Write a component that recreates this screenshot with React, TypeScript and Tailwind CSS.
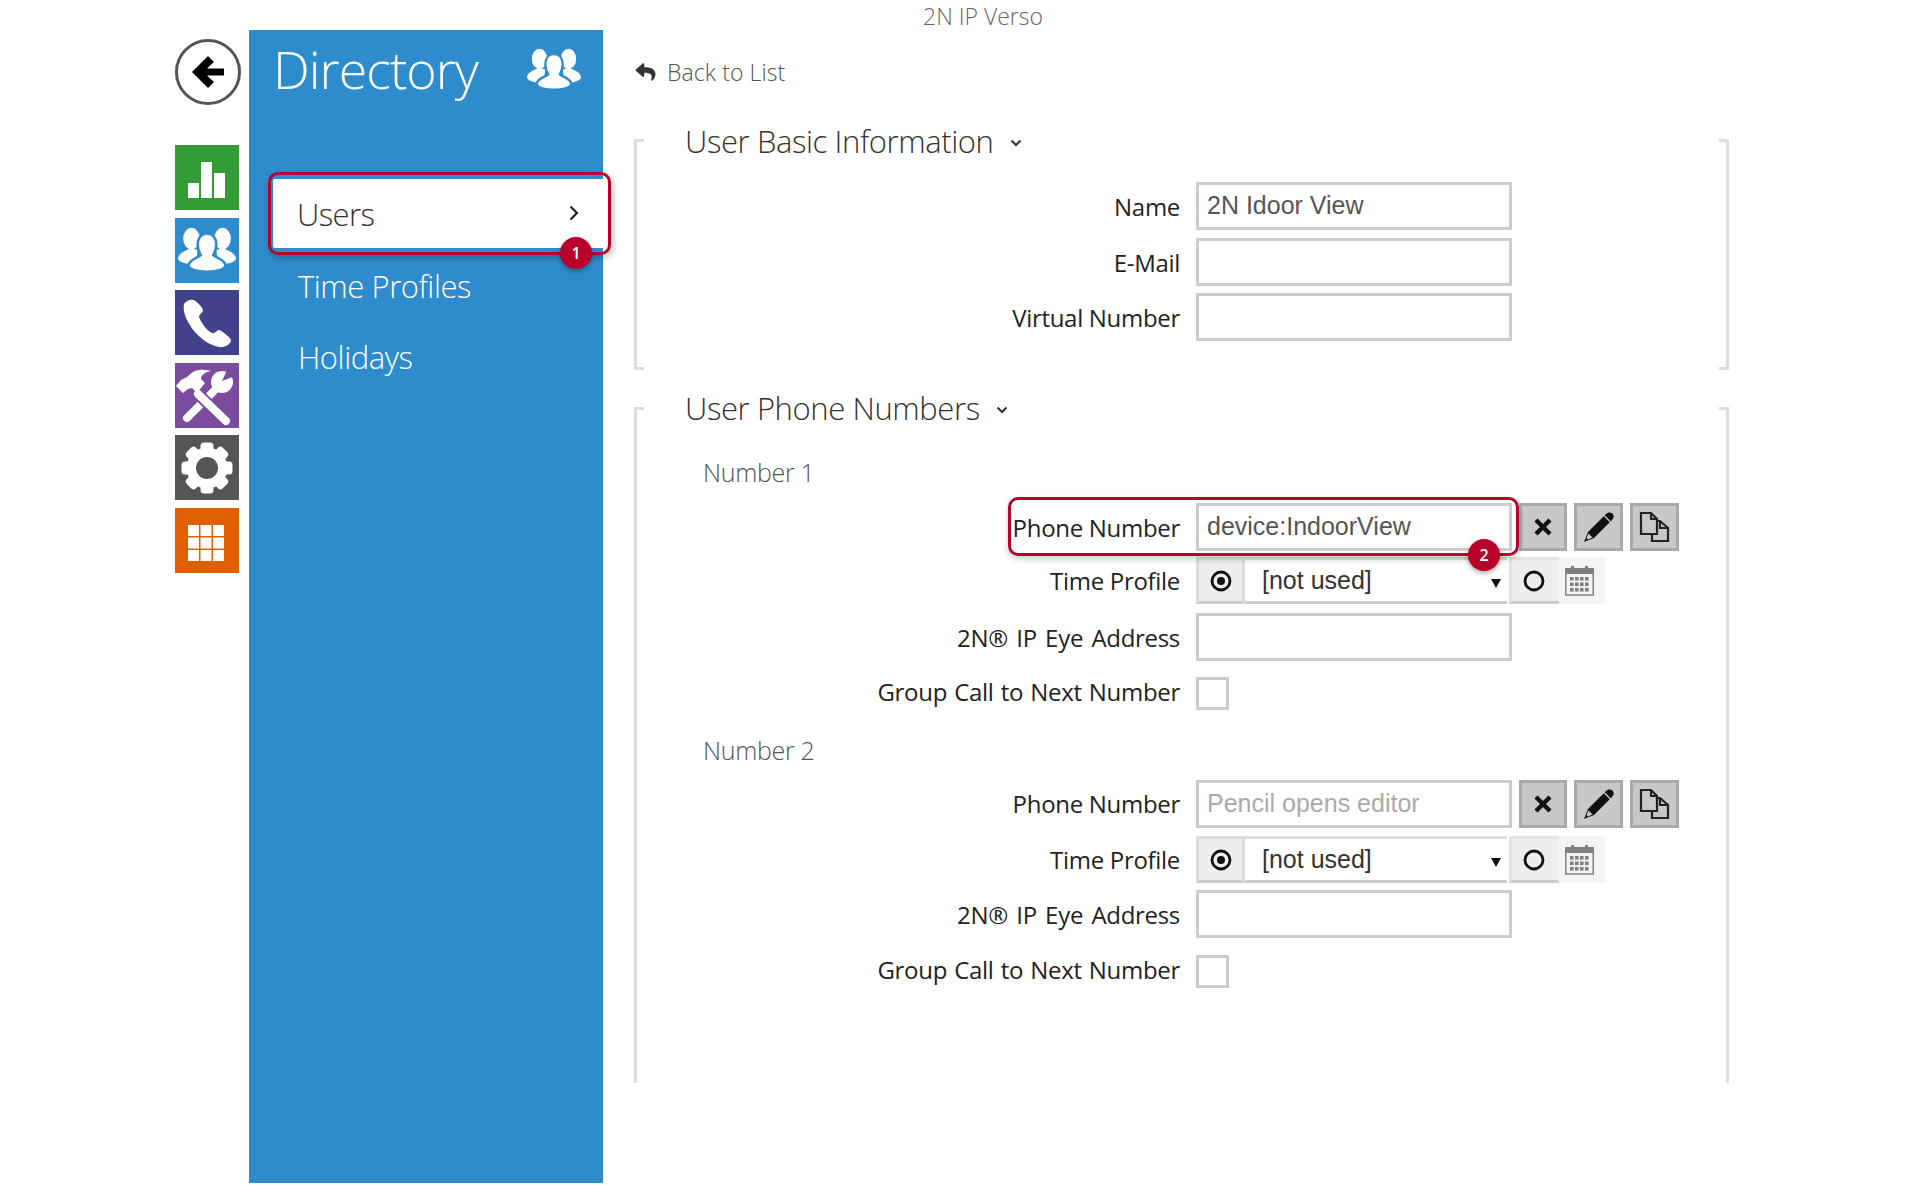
import { FunctionComponent, ReactNode } from "react";
import { FaReply } from "react-icons/fa";

const UsersIcon: FunctionComponent<{ cut: string; className: string }> = ({ cut, className }) => (
  <svg viewBox="0 0 58 44" className={className} fill="#fff">
    <ellipse cx="14" cy="11" rx="8" ry="10.5" />
    <path d="M1 30C2 24 9 23 13 20L20 22L18 36C10 36 1 34 1 30Z" />
    <ellipse cx="44" cy="11" rx="8" ry="10.5" />
    <path d="M57 30C56 24 49 23 45 20L38 22L40 36C48 36 57 34 57 30Z" />
    <path
      d="M29 6C35 6 38 11 38 17C38 22 36 25 35 27C38 30 46 31 47 37C46 41 38 43 29 43C20 43 12 41 11 37C12 31 20 30 23 27C22 25 20 22 20 17C20 11 23 6 29 6Z"
      stroke={cut}
      strokeWidth="2.5"
    />
  </svg>
);

const Tile: FunctionComponent<{ color: string; children: ReactNode }> = ({ color, children }) => (
  <div className={`w-[64px] h-[65px] flex items-center justify-center ${color}`}>{children}</div>
);

const TEETH = [0, 45, 90, 135, 180, 225, 270, 315];

const SideNav: FunctionComponent = () => (
  <div className="w-[249px] shrink-0 pl-[175px] flex flex-col">
    <div className="mt-[39px] w-[66px] h-[66px] rounded-full border-[3px] border-[#555] flex items-center justify-center">
      <svg viewBox="0 0 32 32" className="w-[32px] h-[32px]" fill="#000">
        <polygon points="0,16 16,0 22,6 15,12.5 32,12.5 32,19.5 15,19.5 22,26 16,32" />
      </svg>
    </div>
    <div className="mt-[40px] flex flex-col gap-[7.6px]">
      <Tile color="bg-[#339c36]">
        <svg viewBox="0 0 64 64" className="w-[64px] h-[64px]" fill="#fff">
          <rect x="13" y="37" width="11" height="15" />
          <rect x="26" y="16" width="11" height="36" />
          <rect x="39" y="27" width="11" height="25" />
        </svg>
      </Tile>
      <Tile color="bg-[#2e8bcc]">
        <UsersIcon cut="#2e8bcc" className="w-[60px] h-[46px]" />
      </Tile>
      <Tile color="bg-[#41418c]">
        <svg viewBox="0 0 64 64" className="w-[64px] h-[64px]" fill="#fff">
          <path d="M9 13C6 26 23 52 44 56C50 57 56 53 56 49C56 47 46 39 44 39C42 39 40 43 37 42C31 39 26 31 24 26C24 23 28 22 28 19C28 17 21 9 18 9C15 8 11 10 9 13Z" />
        </svg>
      </Tile>
      <Tile color="bg-[#7b4b9e]">
        <svg viewBox="0 0 64 64" className="w-[64px] h-[64px]" fill="#fff">
          <path d="M12 55L40 27" stroke="#fff" strokeWidth="8" strokeLinecap="round" />
          <circle cx="47" cy="19" r="11" />
          <polygon points="47,18 53,5 64,5 63,12" fill="#7b4b9e" />
          <path d="M23 31L51 58" stroke="#7b4b9e" strokeWidth="12" strokeLinecap="round" />
          <path d="M23 31L51 58" stroke="#fff" strokeWidth="8" strokeLinecap="round" />
          <path d="M1 23L6 17L12 14C18 7 26 5 36 8C30 9 26 12 26 16L30 20L22 30L17 25L13 26L8 30Z" />
        </svg>
      </Tile>
      <Tile color="bg-[#555555]">
        <svg viewBox="0 0 64 64" className="w-[64px] h-[64px]" fill="#fff">
          {TEETH.map((a) => (
            <rect key={a} x="25.5" y="6.5" width="13" height="12" rx="3.5" transform={`rotate(${a} 32 32)`} />
          ))}
          <circle cx="32" cy="32" r="20.5" />
          <circle cx="32" cy="32" r="11" fill="#555555" />
        </svg>
      </Tile>
      <Tile color="bg-[#e05f00]">
        <svg viewBox="0 0 64 64" className="w-[64px] h-[64px]" fill="#fff">
          {[13, 25.5, 38].map((x) =>
            [17, 29.5, 42].map((y) => <rect key={`${x}-${y}`} x={x} y={y} width="11" height="11" />)
          )}
        </svg>
      </Tile>
    </div>
  </div>
);

const Panel: FunctionComponent = () => (
  <div className="mt-[30px] w-[354px] h-[1153px] shrink-0 bg-[#2e8bcc] text-white font-['Open_Sans',sans-serif] font-light">
    <div className="h-[74px] flex items-center justify-between pl-[24px] pr-[21px]">
      <span className="text-[52px] leading-[60px] tracking-[-1px] mt-[4px]">Directory</span>
      <UsersIcon cut="#2e8bcc" className="w-[56px] h-[43px] mt-[5px]" />
    </div>
    <div className="relative mt-[68px] ml-[19px] mr-[-8px] h-[83px] rounded-[10px] border-[3px] border-[#b8002a] px-[2px] py-[4px] shadow-[2px_3px_6px_rgba(0,0,0,0.25)]">
      <div className="h-[69px] bg-white rounded-[2px] flex items-center justify-between pl-[24px] pr-[27px] text-[#333]">
        <span className="text-[31px] leading-[40px] tracking-[-0.6px]">Users</span>
        <svg viewBox="0 0 10 16" className="w-[10px] h-[16px] mb-[2px]" fill="none" stroke="#222" strokeWidth="2.2">
          <polyline points="1.5,1.5 8,8 1.5,14.5" />
        </svg>
      </div>
      <div className="absolute right-[16px] bottom-[-17px] w-[32px] h-[32px] rounded-full bg-[#b8002a] text-white text-[16px] font-semibold flex items-center justify-center shadow-[0_2px_5px_rgba(0,0,0,0.35)]">
        1
      </div>
    </div>
    <div className="mt-[11px] pl-[49px] text-[31px] leading-[40px] tracking-[-0.45px]">Time Profiles</div>
    <div className="mt-[31px] pl-[49px] text-[31px] leading-[40px] tracking-[-0.45px]">Holidays</div>
  </div>
);

const Chevron: FunctionComponent = () => (
  <svg viewBox="0 0 12 8" className="w-[12px] h-[8px] ml-[16px] mt-[4px]" fill="none" stroke="#333" strokeWidth="2">
    <polyline points="1.5,1.5 6,6 10.5,1.5" />
  </svg>
);

const Heading: FunctionComponent<{ text: string }> = ({ text }) => (
  <div className="ml-[41px] h-[40px] flex items-center text-[#333] text-[31px] leading-[40px] font-light tracking-[-0.4px]">
    {text}
    <Chevron />
  </div>
);

const Label: FunctionComponent<{ text: ReactNode; extra?: string }> = ({ text, extra = "pt-[2px]" }) => (
  <div className={`w-[536px] shrink-0 text-right text-[#222] text-[24px] tracking-[-0.3px] ${extra}`}>{text}</div>
);

const inputClass =
  "w-[316px] h-[48px] border-[3px] border-[#cccccc] bg-white px-[8px] pb-[2px] text-[25px] text-[#555] font-['Liberation_Sans',sans-serif] outline-none placeholder:text-[#aaaaaa]";

const TextRow: FunctionComponent<{
  label: ReactNode;
  value?: string;
  placeholder?: string;
  className: string;
  labelExtra?: string;
  children?: ReactNode;
}> = ({ label, value, placeholder, className, labelExtra, children }) => (
  <div className={`flex items-center h-[48px] gap-[16px] ${className}`}>
    <Label text={label} extra={labelExtra} />
    <input className={inputClass} defaultValue={value} placeholder={placeholder} readOnly />
    {children}
  </div>
);

const buttonClass = "h-[48px] bg-[#c8c8c8] border-[3px] border-[#a9a9a9] flex items-center justify-center";

const Actions: FunctionComponent = () => (
  <div className="flex gap-[7px] ml-[-9px]">
    <div className={`w-[48px] ${buttonClass}`}>
      <svg viewBox="0 0 18 18" className="w-[18px] h-[18px]" stroke="#111" strokeWidth="4.4">
        <path d="M2 2L16 16M16 2L2 16" />
      </svg>
    </div>
    <div className={`w-[49px] ${buttonClass}`}>
      <svg viewBox="0 0 30 30" className="w-[30px] h-[30px]">
        <path d="M0 30L4 20L22 2C24 0 27 0 29 2C30 4 30 6 28 8L10 26Z" fill="#111" />
        <path d="M20 3.5L26.5 10" stroke="#c8c8c8" strokeWidth="1.2" />
        <polygon points="2.5,26 4.5,21.5 8.5,25.5 4,27.5" fill="#c8c8c8" />
      </svg>
    </div>
    <div className={`w-[49px] ${buttonClass}`}>
      <svg viewBox="0 0 32 32" className="w-[32px] h-[32px]" fill="none" stroke="#222" strokeWidth="2.2">
        <path d="M2 2H12L18 8V23H2Z" />
        <path d="M12 2V8H18" />
        <path d="M18 10H21L29 17V30H13V23" />
        <path d="M21 10V17H29" />
      </svg>
    </div>
  </div>
);

const Radio: FunctionComponent<{ on?: boolean }> = ({ on }) => (
  <svg viewBox="0 0 22 22" className="w-[22px] h-[22px]" fill="none" stroke="#111" strokeWidth="2.8">
    <circle cx="11" cy="11" r="9" />
    {on && <circle cx="11" cy="11" r="4" fill="#111" stroke="none" />}
  </svg>
);

const DOTS = [0, 1, 2, 3];

const Calendar: FunctionComponent = () => (
  <svg viewBox="0 0 29 30" className="w-[29px] h-[30px]" fill="#808080">
    <rect x="0.75" y="3" width="27.5" height="26" fill="#f4f4f4" stroke="#808080" strokeWidth="1.5" />
    <rect x="0" y="2" width="29" height="6" />
    <rect x="6" y="0" width="3" height="3" />
    <rect x="20" y="0" width="3" height="3" />
    {DOTS.map((c) =>
      [0, 1, 2].map((r) => <rect key={`${c}-${r}`} x={5 + c * 5} y={11 + r * 5.5} width="3.6" height="3.6" />)
    )}
  </svg>
);

const TimeRow: FunctionComponent<{ className: string }> = ({ className }) => (
  <div className={`flex items-center h-[47px] gap-[16px] ${className}`}>
    <Label text="Time Profile" extra="pb-[0px]" />
    <div className="flex h-[47px]">
      <div className="w-[49px] bg-[#eeeeee] border-[3px] border-[#dddddd] border-b-[#cccccc] flex items-center justify-center">
        <Radio on />
      </div>
      <div className="w-[262px] border-y-[3px] border-[#dddddd] border-b-[#cccccc] flex items-center justify-between pl-[17px] pr-[6px] text-[25px] text-[#333] font-['Liberation_Sans',sans-serif]">
        [not used]
        <svg viewBox="0 0 10 9" className="w-[10px] h-[9px] mt-[6px]" fill="#111">
          <polygon points="0,0 10,0 5,9" />
        </svg>
      </div>
      <div className="w-[50px] ml-[2px] pr-[3px] bg-[#eeeeee] border-[3px] border-r-0 border-[#e4e4e4] border-b-[#cccccc] flex items-center justify-center">
        <Radio />
      </div>
      <div className="w-[46px] pl-[6px] bg-[#f4f4f4] flex items-center justify-start">
        <Calendar />
      </div>
    </div>
  </div>
);

const CheckRow: FunctionComponent<{ className: string }> = ({ className }) => (
  <div className={`flex items-center h-[33px] gap-[16px] ${className}`}>
    <Label text="Group Call to Next Number" extra="pb-[4px] [word-spacing:1.2px]" />
    <div className="w-[33px] h-[33px] border-[3px] border-[#cccccc] bg-white" />
  </div>
);

const NumberTitle: FunctionComponent<{ text: string }> = ({ text }) => (
  <div className="ml-[59px] h-[40px] flex items-center text-[#555] text-[25px] leading-[40px] font-light tracking-[-0.3px]">{text}</div>
);

const EYE_LABEL = "2N® IP Eye Address";
const EYE_EXTRA = "pt-[2px] [word-spacing:2.4px]";

const Main: FunctionComponent = () => (
  <div className="flex-1 pl-[31px] font-['Open_Sans',sans-serif]">
    <div className="h-[30px] pt-[1px] pl-[289px] text-[#666] text-[23px] leading-[30px] font-light">2N IP Verso</div>
    <div className="mt-[26px] h-[32px] flex items-center gap-[10px] text-[#555] text-[23px] font-light tracking-[0.1px]">
      <FaReply className="w-[23px] h-[20px] text-[#333]" />
      Back to List
    </div>
    <section className="mt-[51px] w-[1095px] h-[231px] flex">
      <div className="w-[10px] border-l-[3px] border-y-[3px] border-[#dddddd]" />
      <div className="flex-1 mt-[-18px]">
        <Heading text="User Basic Information" />
        <TextRow className="mt-[21px]" label="Name" value="2N Idoor View" />
        <TextRow className="mt-[8px]" label="E-Mail" />
        <TextRow className="mt-[7px]" label="Virtual Number" />
      </div>
      <div className="w-[10px] border-r-[3px] border-y-[3px] border-[#dddddd]" />
    </section>
    <section className="mt-[37px] w-[1095px] h-[676px] flex">
      <div className="w-[10px] border-l-[3px] border-t-[3px] border-[#dddddd]" />
      <div className="flex-1 mt-[-19px]">
        <Heading text="User Phone Numbers" />
        <div className="mt-[24px]">
          <NumberTitle text="Number 1" />
        </div>
        <div className="relative mt-[11px]">
          <TextRow className="" label="Phone Number" value="device:IndoorView">
            <Actions />
          </TextRow>
          {/* callout frame around the phone field */}
          <div className="absolute left-[364px] top-[-6px] w-[511px] h-[59px] rounded-[10px] border-[3px] border-[#b8002a] shadow-[0_3px_6px_rgba(0,0,0,0.2)] pointer-events-none" />
          <div className="absolute left-[824px] top-[36px] w-[32px] h-[32px] rounded-full bg-[#b8002a] text-white text-[16px] font-semibold flex items-center justify-center shadow-[0_2px_5px_rgba(0,0,0,0.35)]">
            2
          </div>
        </div>
        <TimeRow className="mt-[6px]" />
        <TextRow className="mt-[9px]" label={EYE_LABEL} labelExtra={EYE_EXTRA} />
        <CheckRow className="mt-[16px]" />
        <div className="mt-[20px]">
          <NumberTitle text="Number 2" />
        </div>
        <TextRow className="mt-[10px]" label="Phone Number" placeholder="Pencil opens editor" labelExtra="pb-[0px]">
          <Actions />
        </TextRow>
        <TimeRow className="mt-[8px]" />
        <TextRow className="mt-[7px]" label={EYE_LABEL} labelExtra={EYE_EXTRA} />
        <CheckRow className="mt-[17px]" />
      </div>
      <div className="w-[10px] border-r-[3px] border-t-[3px] border-[#dddddd]" />
    </section>
  </div>
);

export default function App() {
  return (
    <div className="w-[1920px] h-[1200px] bg-white flex overflow-hidden">
      <SideNav />
      <Panel />
      <Main />
    </div>
  );
}
